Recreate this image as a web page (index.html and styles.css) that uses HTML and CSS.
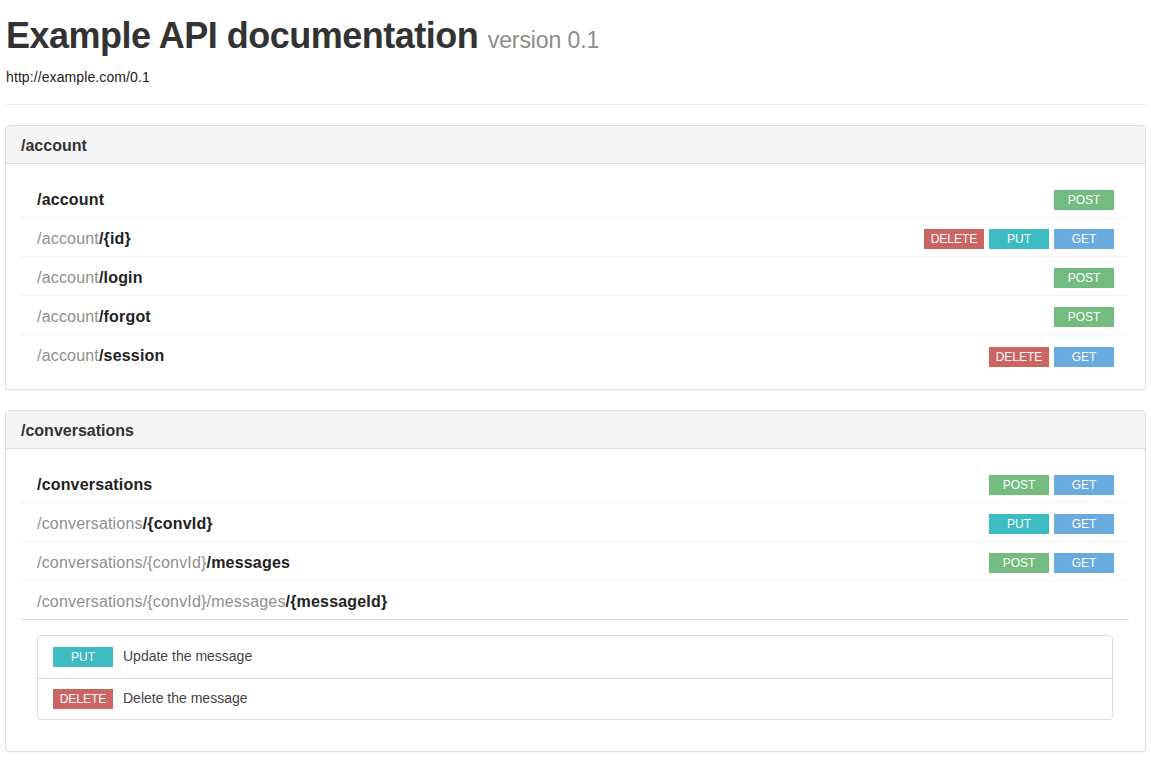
FILE: index.html
```html
<!DOCTYPE html>
<html>
<head>
<meta charset="utf-8">
<title>Example API documentation</title>
<link rel="stylesheet" href="styles.css">
</head>
<body>
<div class="container">
  <header class="page-header">
    <h1 class="title">Example API documentation <small class="version">version 0.1</small></h1>
    <p class="base-url">http://example.com/0.1</p>
  </header>

  <section class="panel">
    <div class="panel-heading"><h3 class="panel-title">/account</h3></div>
    <div class="panel-body">
      <div class="resource">
        <div class="res-row">
          <span class="path"><b>/account</b></span>
          <span class="methods"><span class="m post">POST</span></span>
        </div>
        <div class="res-row">
          <span class="path"><span class="parent">/account</span><b>/{id}</b></span>
          <span class="methods"><span class="m delete">DELETE</span><span class="m put">PUT</span><span class="m get">GET</span></span>
        </div>
        <div class="res-row">
          <span class="path"><span class="parent">/account</span><b>/login</b></span>
          <span class="methods"><span class="m post">POST</span></span>
        </div>
        <div class="res-row">
          <span class="path"><span class="parent">/account</span><b>/forgot</b></span>
          <span class="methods"><span class="m post">POST</span></span>
        </div>
        <div class="res-row last">
          <span class="path"><span class="parent">/account</span><b>/session</b></span>
          <span class="methods"><span class="m delete">DELETE</span><span class="m get">GET</span></span>
        </div>
      </div>
    </div>
  </section>

  <section class="panel">
    <div class="panel-heading"><h3 class="panel-title">/conversations</h3></div>
    <div class="panel-body">
      <div class="resource">
        <div class="res-row">
          <span class="path"><b>/conversations</b></span>
          <span class="methods"><span class="m post">POST</span><span class="m get">GET</span></span>
        </div>
        <div class="res-row">
          <span class="path"><span class="parent">/conversations</span><b>/{convId}</b></span>
          <span class="methods"><span class="m put">PUT</span><span class="m get">GET</span></span>
        </div>
        <div class="res-row">
          <span class="path"><span class="parent">/conversations/{convId}</span><b>/messages</b></span>
          <span class="methods"><span class="m post">POST</span><span class="m get">GET</span></span>
        </div>
        <div class="res-row open">
          <span class="path"><span class="parent">/conversations/{convId}/messages</span><b>/{messageId}</b></span>
          <span class="methods"></span>
        </div>
        <div class="details">
          <div class="detail-row">
            <span class="m put">PUT</span><span class="desc">Update the message</span>
          </div>
          <div class="detail-row">
            <span class="m delete">DELETE</span><span class="desc">Delete the message</span>
          </div>
        </div>
      </div>
    </div>
  </section>
</div>
</body>
</html>
```

FILE: styles.css
```css
* { box-sizing: border-box; }
html, body { margin: 0; padding: 0; background: #fff; }
body {
  font-family: "Liberation Sans", Arial, Helvetica, sans-serif;
  font-size: 14px;
  line-height: 1.42857;
  color: #333;
}
.container { padding: 0 5px 8px 5px; }

.page-header {
  border-bottom: 1px solid #eee;
  margin: 0 0 20px 1px;
  padding-bottom: 8px;
}
.title {
  margin: 0;
  padding-top: 16px;
  font-size: 36px;
  line-height: 40px;
  font-weight: bold;
  color: #333;
  letter-spacing: -0.5px;
}
.version {
  font-size: 23px;
  font-weight: normal;
  color: #8c8c8c;
  letter-spacing: -0.1px;
}
.base-url {
  margin: 8px 0 10px 0;
  font-size: 14px;
  line-height: 18px;
  color: #222;
  letter-spacing: 0.1px;
}

.panel {
  border: 1px solid #ddd;
  border-radius: 4px;
  margin-bottom: 20px;
  box-shadow: 0 1px 1px rgba(0,0,0,.05);
  background: #fff;
}
.panel-heading {
  background: #f5f5f5;
  border-bottom: 1px solid #ddd;
  border-radius: 3px 3px 0 0;
  padding: 11px 15px 9px 15px;
}
.panel-title {
  margin: 0;
  font-size: 16px;
  line-height: 17px;
  font-weight: bold;
  color: #333;
}
.panel-body { padding: 15px 16px 15px 15px; }

.res-row {
  display: flex;
  align-items: center;
  justify-content: space-between;
  height: 39px;
  padding: 4px 15px 0 16px;
  border-bottom: 1px solid #f2f2f2;
  background: #fff;
}
.res-row.last { border-bottom: none; }
.res-row.open { border-bottom: 1px solid #ddd; }
.path { font-size: 16px; letter-spacing: 0.18px; }
.path b { color: #222; font-weight: bold; }
.path .parent { color: #8f8f8f; }
.methods { display: flex; gap: 5px; }

.m {
  display: inline-block;
  width: 60px;
  height: 20px;
  line-height: 20px;
  text-align: center;
  font-size: 12px;
  color: #fff;
  letter-spacing: 0;
}
.m.post { background: #73bb7f; }
.m.get { background: #6aabdf; }
.m.put { background: #3dbbc3; }
.m.delete { background: #cc6461; }

.details {
  margin: 15px 16px 16px 16px;
  border: 1px solid #ddd;
  border-radius: 4px;
}
.detail-row {
  display: flex;
  align-items: center;
  height: 42px;
  padding: 0 15px;
}
.detail-row + .detail-row { border-top: 1px solid #ddd; height: 41px; }
.desc { margin-left: 10px; font-size: 14px; color: #444; }
```
